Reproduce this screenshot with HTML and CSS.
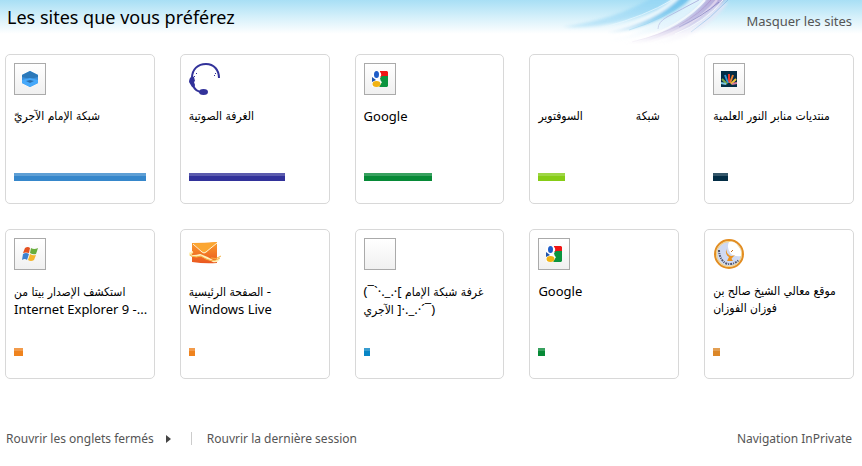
FILE: index.html
```html
<!DOCTYPE html>
<html lang="fr">
  <head>
    <meta charset="UTF-8" />
    <meta name="viewport" content="width=device-width, initial-scale=1.0" />
    <title>Nouvel onglet</title>
    <link rel="stylesheet" href="styles.css">
  </head>
  <body>
    <header class="header">
      <svg class="streaks" width="180" height="50" viewBox="0 0 180 50" aria-hidden="true">
        <defs>
          <linearGradient id="fade" x1="0" y1="0" x2="0" y2="1">
            <stop offset="0" stop-color="#fff" />
            <stop offset="0.45" stop-color="#fff" stop-opacity="0.7" />
            <stop offset="0.9" stop-color="#fff" stop-opacity="0" />
          </linearGradient>
          <mask id="fade-mask"><rect width="180" height="50" fill="url(#fade)" /></mask>
          <filter id="soft"><feGaussianBlur stdDeviation="1.5" /></filter>
          <filter id="fine"><feGaussianBlur stdDeviation="0.5" /></filter>
        </defs>
        <g mask="url(#fade-mask)">
          <g filter="url(#soft)">
            <path d="M96 -3Q60 19 6 27Q60 31 130 -3Z" fill="#8ed3f3" opacity="0.7" />
            <path d="M118 -3Q88 24 22 38Q92 30 137 -3Z" fill="#fff" opacity="0.8" />
            <path d="M124 -3Q98 23 50 33Q102 27 136 -3Z" fill="#64bdea" opacity="0.9" />
            <path d="M136 -3Q112 27 50 42Q122 34 152 -3Z" fill="#e4f4fd" opacity="0.9" />
            <path d="M151 -3Q129 27 66 46Q136 38 170 -3Z" fill="#b9a8da" opacity="0.9" />
            <path d="M158 6Q132 32 88 48Q142 42 172 2Z" fill="#e8e4f6" opacity="0.8" />
          </g>
          <g fill="none" stroke-width="1" opacity="0.8" filter="url(#fine)">
            <path d="M115 0Q88 16 48 27" stroke="#e9f8ff" />
            <path d="M130 0Q108 19 72 30" stroke="#7cc6ec" />
            <path d="M142 0Q125 9 110 17Q101 22 101 29" stroke="#a7a7d8" />
            <path d="M148 0Q124 27 82 39" stroke="#fff" stroke-width="2" />
            <path d="M154 0Q130 29 75 42" stroke="#ab91c9" />
            <path d="M160 0Q138 27 92 42" stroke="#e6d7ee" stroke-width="2" />
            <path d="M162 2Q146 16 122 27" stroke="#8177bd" />
            <path d="M166 0Q149 22 118 34" stroke="#fff" />
            <path d="M171 0Q154 18 134 32" stroke="#8bb8e4" />
          </g>
        </g>
      </svg>
      <h1 class="title">Les sites que vous préférez</h1>
      <a class="link" href="#">Masquer les sites</a>
    </header>

    <main class="sites">
      <a class="card" href="#">
        <span class="icon framed">
          <svg width="16" height="16" viewBox="0 0 16 16">
            <path d="M8 0L16 4V12L8 16L0 12V4Z" fill="#3b97e8" />
            <path d="M8 0L16 4V7L8 9L0 7V4Z" fill="#2b78b9" />
            <path d="M0 6L8 8L16 6V9L8 11L0 9Z" fill="#3a8fdb" />
            <path d="M0 9L8 7L16 9V12L8 16L0 12Z" fill="#46a8fa" />
            <path d="M4 10L8 9L12 10L8 12Z" fill="#2b6fae" />
          </svg>
        </span>
        <span class="name arabic">شبكة الإمام الآجريّ</span>
        <span class="bar blue" style="width: 100%"></span>
      </a>

      <a class="card" href="#">
        <span class="icon">
          <svg width="32" height="32" viewBox="0 0 32 32" fill="#32329a">
            <path d="M3 15C3 6 9 1 17 1C25 1 30 7 30 15" fill="none" stroke="#32329a" stroke-width="2" />
            <path d="M3 13L5 14L6 18L5 19L6 22L5 25L3 24L0 19Q0 15 3 13Z" />
            <path d="M4 22Q6 29 14 29" fill="none" stroke="#32329a" stroke-width="2" />
            <ellipse cx="14.500" cy="29" rx="4.500" ry="3" />
            <path d="M7 10h1v1h-1zM5 13h1v1h-1zM26 10h1v1h-1zM25 12h1v1h-1z" />
          </svg>
        </span>
        <span class="name arabic">الغرفة الصوتية</span>
        <span class="bar indigo" style="width: 73%"></span>
      </a>

      <a class="card" href="#">
        <span class="icon framed">
          <svg width="16" height="16" viewBox="0 0 16 16">
            <path d="M8 0H15L16 1V6H8Z" fill="#f01414" />
            <path d="M8 7L10 5H16V15L15 16H7L9 11Z" fill="#0c943f" />
            <path d="M6 0Q10 1 9 5L6 8L10 11L7 16H0V0Z" fill="#fff" />
            <ellipse cx="4.500" cy="3.500" rx="2.500" ry="3.500" fill="#1d5cc8" />
            <path d="M0 6L4 9L0 11Z" fill="#1f53a8" />
            <ellipse cx="4.500" cy="13" rx="4" ry="3" fill="#f1b211" />
          </svg>
        </span>
        <span class="name">Google</span>
        <span class="bar green" style="width: 52%"></span>
      </a>

      <a class="card" href="#">
        <span class="icon"></span>
        <span class="name arabic">شبكة<span class="blank"></span>السوفتوير</span>
        <span class="bar lime" style="width: 20%"></span>
      </a>

      <a class="card" href="#">
        <span class="icon framed">
          <svg width="16" height="16" viewBox="0 0 16 16" fill="none" stroke-width="2">
            <rect width="16" height="16" fill="#032d45" />
            <path d="M8 12V3" stroke="#e93528" />
            <path d="M7 12L4 4" stroke="#3293d5" />
            <path d="M9 12L12 4" stroke="#ed8130" />
            <path d="M6 13L1 8" stroke="#76a84b" />
            <path d="M10 13L15 8" stroke="#f1c83b" />
            <path d="M5 13L0 12" stroke="#7cc6df" />
            <path d="M11 13L16 12" stroke="#d77a9e" />
          </svg>
        </span>
        <span class="name arabic">منتديات منابر النور العلمية</span>
        <span class="bar navy" style="width: 11%"></span>
      </a>

      <a class="card" href="#">
        <span class="icon framed">
          <svg width="16" height="16" viewBox="0 0 16 16">
            <path d="M3 2Q6 0 8 2L7 7Q4 6 1 7Z" fill="#e4501f" />
            <path d="M9 2Q12 4 16 2L14 8Q11 9 8 7Z" fill="#68ad3c" />
            <path d="M1 8Q4 6 7 8L5 14Q3 12 0 14Z" fill="#3c81cf" />
            <path d="M8 8Q11 10 14 9L12 14Q9 16 6 14Z" fill="#f4b52c" />
          </svg>
        </span>
        <span class="name"><span class="arabic">استكشف الإصدار بيتا من</span><br>Internet Explorer 9 -...</span>
        <span class="bar orange" style="width: 7%"></span>
      </a>

      <a class="card" href="#">
        <span class="icon">
          <svg width="32" height="32" viewBox="0 0 32 32" fill="none">
            <defs>
              <linearGradient id="mail" x1="0" y1="0" x2="0" y2="1">
                <stop offset="0" stop-color="#fb9d2c" />
                <stop offset="1" stop-color="#ea5720" />
              </linearGradient>
            </defs>
            <path d="M3 5Q16 5 28 4V25Q16 26 3 24Z" fill="url(#mail)" />
            <path d="M4 5Q16 6 28 4L17 15Q15 16 13 14Z" fill="#fba632" />
            <path d="M4 6L13 14Q15 16 17 14L28 5" stroke="#fff2d5" />
            <path d="M4 14Q0 15 1 17Q4 19 11 17Q19 20 24 23Q28 24 30 21" stroke="#fff0ba" stroke-width="2" />
            <path d="M4 15Q0 17 2 18Q8 20 12 18Q22 26 31 20M22 20Q27 22 32 18" stroke="#f5b243" />
          </svg>
        </span>
        <span class="name"><span class="arabic">الصفحة الرئيسية</span> -<br>Windows Live</span>
        <span class="bar orange" style="width: 5%"></span>
      </a>

      <a class="card" href="#">
        <span class="icon framed"></span>
        <span class="name">(¯`·._.·[ <span class="arabic">غرفة شبكة الإمام</span><br><span class="arabic">الآجري</span> ]·._.·´¯)</span>
        <span class="bar azure" style="width: 5%"></span>
      </a>

      <a class="card" href="#">
        <span class="icon framed">
          <svg width="16" height="16" viewBox="0 0 16 16">
            <path d="M8 0H15L16 1V6H8Z" fill="#f01414" />
            <path d="M8 7L10 5H16V15L15 16H7L9 11Z" fill="#0c943f" />
            <path d="M6 0Q10 1 9 5L6 8L10 11L7 16H0V0Z" fill="#fff" />
            <ellipse cx="4.500" cy="3.500" rx="2.500" ry="3.500" fill="#1d5cc8" />
            <path d="M0 6L4 9L0 11Z" fill="#1f53a8" />
            <ellipse cx="4.500" cy="13" rx="4" ry="3" fill="#f1b211" />
          </svg>
        </span>
        <span class="name">Google</span>
        <span class="bar green" style="width: 5%"></span>
      </a>

      <a class="card" href="#">
        <span class="icon">
          <svg width="32" height="32" viewBox="0 0 32 32" fill="none">
            <circle cx="16" cy="16" r="14" fill="#cfd9f2" stroke="#e38d20" stroke-width="2" />
            <circle cx="16" cy="16" r="12.500" stroke="#ffd372" />
            <path d="M16 4Q22 3 25 8Q29 12 28 18Q22 19 18 16Q13 10 16 4Z" fill="#fff" />
            <path d="M14 9Q12 14 16 17Q18 19 22 17L19 20Q18 21 20 23H14L16 19Q11 16 14 9Z" fill="#eb911c" />
            <path d="M18 14L20 12" stroke="#c16e24" />
            <path d="M6 12Q6 20 12 25Q19 28 26 22" stroke="#53566b" stroke-width="2" stroke-dasharray="2 1 1 1" />
          </svg>
        </span>
        <span class="name arabic">موقع معالي الشيخ صالح بن<br>فوزان الفوزان</span>
        <span class="bar amber" style="width: 5%"></span>
      </a>
    </main>

    <footer class="footer">
      <button class="link menu" type="button">
        Rouvrir les onglets fermés
        <svg width="5" height="8" viewBox="0 0 5 8" aria-hidden="true"><path d="M0 0L5 4L0 8Z" fill="#444" /></svg>
      </button>
      <span class="separator"></span>
      <a class="link" href="#">Rouvrir la dernière session</a>
      <a class="link private" href="#">Navigation InPrivate</a>
    </footer>
  </body>
</html>
```
FILE: styles.css
```css
body {
  margin: 0;
  background-color: #fff;
  color: #000;
  font-family: "Noto Sans", "DejaVu Sans", sans-serif;
  font-size: 13px;
  line-height: 17px;
}

.header {
  position: relative;
  display: flex;
  justify-content: space-between;
  padding: 5px 10px 0 7px;
  height: 49px;
  background: linear-gradient(#a8dff5 0, #d2effa 16px, #fff 34px);
}

.streaks {
  position: absolute;
  top: 0;
  right: 125px;
}

.title {
  position: relative;
  margin: 0;
  font-size: 18px;
  font-weight: normal;
  line-height: 24px;
}

.link {
  color: #555;
  font-size: 12px;
  text-decoration: none;
}

.link:hover {
  text-decoration: underline;
}

.header .link {
  position: relative;
  padding-top: 8px;
  font-size: 13px;
}

.sites {
  display: grid;
  grid-template-columns: repeat(5, 1fr);
  gap: 25px;
  padding: 0 8px 0 5px;
}

.card {
  display: flex;
  flex-direction: column;
  box-sizing: border-box;
  min-width: 0;
  min-height: 150px;
  padding: 8px 8px 22px;
  border: 1px solid #d8d8d8;
  border-radius: 5px;
  color: #000;
  text-decoration: none;
}

.card:hover {
  border-color: #a9cfe6;
}

.icon {
  display: flex;
  align-items: center;
  justify-content: center;
  box-sizing: border-box;
  width: 32px;
  height: 32px;
}

.framed {
  border: 1px solid #aaa;
  background: linear-gradient(#fff, #f0f0f0);
}

.name {
  margin-top: 13px;
  white-space: nowrap;
}

.arabic {
  font-family: "DejaVu Sans Condensed", "DejaVu Sans", sans-serif;
  font-size: 12px;
}

.blank {
  display: inline-block;
  width: 53px;
}

.bar {
  height: 5px;
  margin-top: auto;
  border-top: 3px solid rgba(255, 255, 255, 0.2);
}

.blue { background-color: #3687cb; }
.indigo { background-color: #32329a; }
.green { background-color: #078a37; }
.lime { background-color: #86cc16; }
.navy { background-color: #032d45; }
.orange { background-color: #ef831e; }
.azure { background-color: #0785c5; }
.amber { background-color: #dc8728; }

.footer {
  display: flex;
  align-items: center;
  padding: 51px 10px 19px 6px;
}

.menu {
  display: flex;
  align-items: center;
  gap: 12px;
  padding: 0;
  border: 0;
  background: none;
  font-family: inherit;
  line-height: 17px;
  cursor: pointer;
}

.separator {
  width: 1px;
  height: 13px;
  margin: 0 15px 0 20px;
  background-color: #ccc;
}

.private {
  margin-left: auto;
}
```
